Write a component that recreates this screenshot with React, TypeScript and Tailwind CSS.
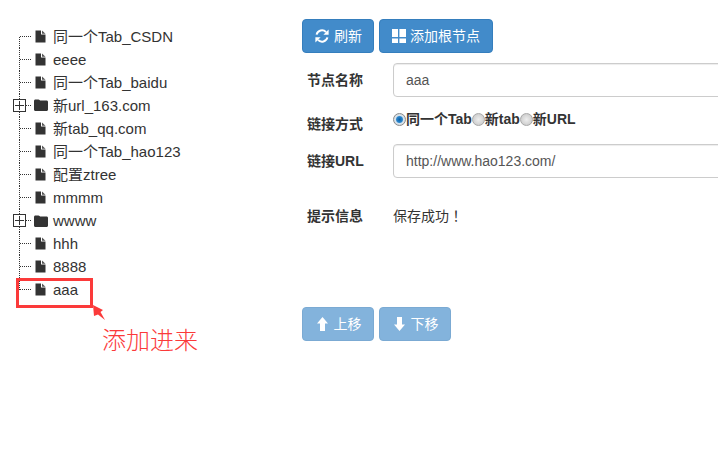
import React from "react";

const FileIcon = () => (
  <svg width="11" height="13" viewBox="0 0 11 13" className="block">
    <path d="M0.5 0.5H6V4.5H10.5V12.5H0.5Z" fill="#333" />
    <path d="M7 0.5L10.5 3.7H7Z" fill="#555" />
  </svg>
);

const FolderIcon = () => (
  <svg width="14" height="12" viewBox="0 0 14 12" className="block">
    <path d="M0 2C0 1 .6 .4 1.5 .4H4.5C5.4 .4 5.8 1.4 6.6 1.6H12.5C13.4 1.6 14 2.2 14 3V10.5C14 11.4 13.4 12 12.5 12H1.5C.6 12 0 11.4 0 10.5Z" fill="#333" />
  </svg>
);

const PlusBox = () => (
  <span className="absolute left-[13px] top-[5px] z-10 flex h-[13px] w-[13px] items-center justify-center border border-[#333] bg-white">
    <svg width="9" height="9" viewBox="0 0 9 9" className="block">
      <path d="M4.5 0V9M0 4.5H9" stroke="#333" strokeWidth="1" />
    </svg>
  </span>
);

type Node = { label: string; folder?: boolean };
const nodes: Node[] = [
  { label: "同一个Tab_CSDN" },
  { label: "eeee" },
  { label: "同一个Tab_baidu" },
  { label: "新url_163.com", folder: true },
  { label: "新tab_qq.com" },
  { label: "同一个Tab_hao123" },
  { label: "配置ztree" },
  { label: "mmmm" },
  { label: "wwww", folder: true },
  { label: "hhh" },
  { label: "8888" },
  { label: "aaa" },
];

const Btn = ({ children, cls }: { children: React.ReactNode; cls: string }) => (
  <button
    className={`flex h-[34px] items-center justify-center rounded-[4px] border border-[#357ebd] bg-[#428bca] text-[14px] text-white ${cls}`}
  >
    {children}
  </button>
);

const Radio = ({ on }: { on?: boolean }) => (
  <span
    className={`inline-block h-[13px] w-[13px] shrink-0 rounded-full border ${
      on
        ? "border-[#8a8a8a] bg-[radial-gradient(circle,#0b5ea6_0,#2a86cc_38%,#d8e4ee_52%,#cfcfcf_100%)]"
        : "border-[#a8a8a8] bg-[radial-gradient(circle,#eeeeee_0,#d6d6d6_55%,#c4c4c4_100%)]"
    }`}
  />
);

const inputCls =
  "h-[34px] w-[400px] shrink-0 rounded-[4px] border border-[#ccc] bg-white px-[12px] text-[14px] text-[#555] shadow-[inset_0_1px_1px_rgba(0,0,0,0.075)] flex items-center";

export default function App() {
  return (
    <div
      className="relative flex h-[453px] w-[718px] overflow-hidden bg-white text-[14px] text-[#333]"
      style={{ fontFamily: '"Liberation Sans", "Noto Sans CJK SC", sans-serif' }}
    >
      {/* tree */}
      <div className="w-[302px] shrink-0 pt-[24.6px]">
        {nodes.map((n, i) => (
          <div key={i} className="relative flex h-[23.09px] items-center text-[15px] leading-none">
            <span
              className={`absolute left-[19px] w-0 border-l border-dotted border-[#333] ${
                i === 0 ? "top-[12px] bottom-0" : i === nodes.length - 1 ? "top-0 h-[12px]" : "top-0 bottom-0"
              }`}
            />
            <span className="absolute left-[20px] top-[11px] w-[11px] border-t border-dotted border-[#333]" />
            {n.folder && <PlusBox />}
            <span className={`flex w-[53px] shrink-0 ${n.folder ? "pl-[34px]" : "pl-[35px]"}`}>
              {n.folder ? <FolderIcon /> : <FileIcon />}
            </span>
            <span className="whitespace-nowrap">{n.label}</span>
          </div>
        ))}
      </div>

      {/* form */}
      <div className="flex min-w-0 flex-1 flex-col pt-[19px]">
        <div className="flex gap-[5px]">
          <Btn cls="w-[72px] gap-[5px] pl-[1px]">
            <svg width="14" height="14" viewBox="0 0 14 14" className="block">
              <path d="M1.6 5.6A5.5 5.5 0 0 1 11 3.1" fill="none" stroke="#fff" strokeWidth="2" />
              <path d="M13.6 .6V5.8H8.4Z" fill="#fff" />
              <path d="M12.4 8.4A5.5 5.5 0 0 1 3 10.9" fill="none" stroke="#fff" strokeWidth="2" />
              <path d="M.4 13.4V8.2H5.6Z" fill="#fff" />
            </svg>
            刷新
          </Btn>
          <Btn cls="w-[114px] gap-[4px]">
            <svg width="14" height="14" viewBox="0 0 14 14" className="block">
              <path d="M0 0H6V8H0ZM7.4 0H14V8H7.4ZM0 9.4H6V14H0ZM7.4 9.4H14V14H7.4Z" fill="#fff" />
            </svg>
            添加根节点
          </Btn>
        </div>

        <div className="mt-[10px] flex items-center">
          <label className="w-[91px] shrink-0 pl-[5px] font-bold">节点名称</label>
          <div className={inputCls}>aaa</div>
        </div>

        <div className="mt-[13px] flex h-[34px]">
          <label className="w-[91px] shrink-0 pl-[5px] pt-[4px] font-bold">链接方式</label>
          <div className="flex h-[17px] items-center pt-[1px] font-bold">
            <Radio on />
            同一个Tab
            <Radio />
            新tab
            <Radio />
            新URL
          </div>
        </div>

        <div className="flex items-center">
          <label className="w-[91px] shrink-0 pl-[5px] font-bold">链接URL</label>
          <div className={inputCls}>http://www.hao123.com/</div>
        </div>

        <div className="mt-[29px] flex h-[19px] items-center">
          <label className="w-[91px] shrink-0 pl-[5px] font-bold">提示信息</label>
          <span className="pb-[3px] font-['Noto_Sans_CJK_TC'] leading-none">保存成功！</span>
        </div>

        <div className="mt-[81px] flex gap-[5px]">
          <Btn cls="w-[72px] gap-[6px] pl-[2px] opacity-65">
            <svg width="11" height="14" viewBox="0 0 11 14" className="block">
              <path d="M5.5 0L11 6.5H8V14H3V6.5H0Z" fill="#fff" />
            </svg>
            上移
          </Btn>
          <Btn cls="w-[72px] gap-[6px] pl-[2px] opacity-65">
            <svg width="11" height="14" viewBox="0 0 11 14" className="block">
              <path d="M5.5 14L11 7.5H8V0H3V7.5H0Z" fill="#fff" />
            </svg>
            下移
          </Btn>
        </div>
      </div>

      {/* annotation */}
      <div className="absolute left-[16px] top-[278px] h-[30px] w-[77px] border-[3px] border-[#fb3a3a]" />
      <svg width="12" height="15" viewBox="0 0 12 15" className="absolute left-[93px] top-[305px]">
        <path d="M0 0L10 5L7.5 7L12 15L5 9.5L1 11Z" fill="#fb3a3a" />
      </svg>
      <span className="absolute left-[102px] top-[329px] text-[24px] font-light leading-none text-[#fb3a3a]">添加进来</span>
    </div>
  );
}
